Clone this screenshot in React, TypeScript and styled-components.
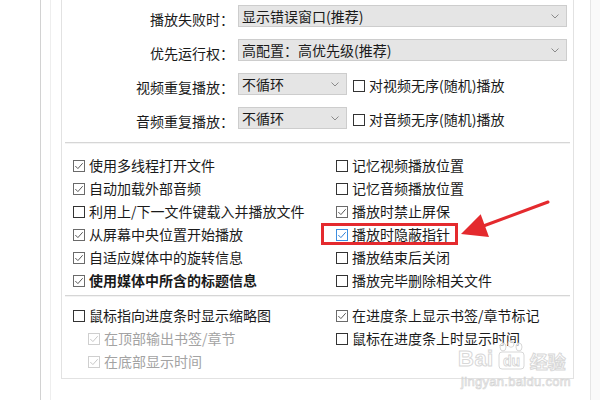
import React from 'react';
import styled, { createGlobalStyle } from 'styled-components';

const GlobalStyle = createGlobalStyle`
  html, body { margin: 0; padding: 0; background: #fff; }
  body { font-family: "Noto Sans CJK SC", "Noto Sans", sans-serif; color: #1a1a1a; }
  * { box-sizing: border-box; }
`;

const Page = styled.div`
  position: relative;
  display: flex;
  width: 600px;
  height: 400px;
  overflow: hidden;
  background: #fff;
`;

const Spacer = styled.div<{ $w: number; $bg?: string }>`
  flex: 0 0 ${p => p.$w}px;
  background: ${p => p.$bg ?? 'transparent'};
`;

const VRule = styled.div<{ $color: string }>`
  flex: 0 0 1px;
  background: ${p => p.$color};
`;

const Main = styled.div`
  flex: 0 0 523px;
  padding-left: 10px;
`;

const Panel = styled.div`
  width: 513px;
  border: 1px solid #e2e2e2;
  border-top: none;
  display: flex;
  flex-direction: column;
`;

const FormGrid = styled.div`
  display: grid;
  grid-template-columns: 172px 1fr;
  grid-auto-rows: 22px;
  column-gap: 4px;
  row-gap: 12px;
  padding: 5px 0 13px;
`;

const FieldLabel = styled.div`
  height: 22px;
  text-align: right;
  font-size: 14px;
  line-height: 22px;
  white-space: nowrap;
  transform: translateY(3px);
`;

const Select = styled.div<{ $w: number }>`
  width: ${p => p.$w}px;
  height: 22px;
  background: #e5e5e5;
  border: 1px solid #cdcdcd;
  display: flex;
  align-items: center;
  justify-content: space-between;
  padding-left: 3px;
  font-size: 14px;
  line-height: 20px;
  white-space: nowrap;
`;

const Chevron = styled.svg`
  flex: none;
  width: 8px;
  height: 5px;
  margin-right: 7px;
`;

const InlineGroup = styled.div`
  display: flex;
  align-items: flex-start;
  gap: 6px;
  height: 22px;
`;

const Sep = styled.div`
  height: 2px;
  margin: 0 3px;
  border-top: 1px solid #d6d6d6;
  border-bottom: 1px solid #f3f3f3;
`;

const CheckGrid = styled.div<{ $pt: number; $pb: number }>`
  display: grid;
  grid-template-columns: 263px 1fr;
  grid-auto-rows: 23px;
  padding: ${p => p.$pt}px 0 ${p => p.$pb}px 11px;
`;

const Item = styled.div<{ $indent?: number; $disabled?: boolean; $bold?: boolean; $top?: number }>`
  position: relative;
  display: flex;
  align-items: center;
  height: 23px;
  margin-top: ${p => p.$top ?? 0}px;
  padding-left: ${p => p.$indent ?? 0}px;
  font-size: 14px;
  line-height: 23px;
  white-space: nowrap;
  font-weight: ${p => (p.$bold ? 700 : 400)};
  color: ${p => (p.$disabled ? '#a3a3a3' : '#1a1a1a')};
`;

const Box = styled.span<{ $tone: 'normal' | 'checked' | 'disabled' | 'focus' }>`
  flex: none;
  width: 12px;
  height: 12px;
  margin-right: 4px;
  display: flex;
  align-items: center;
  justify-content: center;
  background: #fff;
  border: 1px solid
    ${p =>
      p.$tone === 'normal'
        ? '#333'
        : p.$tone === 'checked'
        ? '#6a6a6a'
        : p.$tone === 'focus'
        ? '#3d8ee0'
        : '#cfcfcf'};
`;

const Highlight = styled.span`
  position: absolute;
  left: -15px;
  top: 0;
  width: 137px;
  height: 22px;
  border: 3px solid #e42a2e;
  pointer-events: none;
`;

const ArrowSvg = styled.svg`
  position: absolute;
  left: 450px;
  top: 190px;
  width: 110px;
  height: 60px;
`;

const Watermark = styled.div`
  position: absolute;
  left: 458px;
  top: 340px;
  display: flex;
  flex-direction: column;
  align-items: flex-start;
  pointer-events: none;
`;

const WmRow = styled.div`
  display: flex;
  align-items: flex-end;
  height: 30px;
`;

const WmLatin = styled.span<{ $size: number }>`
  font-family: "Liberation Sans", Arial, sans-serif;
  font-weight: 700;
  font-size: ${p => p.$size}px;
  line-height: 1;
  color: rgba(255, 255, 255, 0.7);
  -webkit-text-stroke: 1px #d8d8d8;
  letter-spacing: 0.5px;
`;

const WmCjk = styled.span`
  font-family: "Noto Sans CJK SC", sans-serif;
  font-weight: 700;
  font-size: 18px;
  line-height: 1;
  color: rgba(255, 255, 255, 0.7);
  -webkit-text-stroke: 1px #d8d8d8;
  margin-left: 1px;
`;

const Paw = styled.svg`
  width: 33px;
  height: 30px;
  margin: 0 1px;
`;

const WmUrl = styled(WmLatin)`
  margin-top: 5px;
  margin-left: 3px;
  font-weight: 400;
  letter-spacing: 0.3px;
  -webkit-text-stroke: 0.7px #d4d4d4;
`;

type Tone = 'normal' | 'checked' | 'disabled' | 'focus';

const Check: React.FC<{ tone: Tone; checked: boolean }> = ({ tone, checked }) => {
  const color = tone === 'focus' ? '#2f80d8' : tone === 'disabled' ? '#c8c8c8' : '#5a5a5a';
  return (
    <Box $tone={tone}>
      {checked && (
        <svg width="10" height="10" viewBox="0 0 10 10">
          <polyline points="1.3,5 3.9,7.6 8.7,2.2" fill="none" stroke={color} strokeWidth="1" />
        </svg>
      )}
    </Box>
  );
};

interface Opt {
  text: string;
  checked?: boolean;
  disabled?: boolean;
  bold?: boolean;
  indent?: number;
  focus?: boolean;
}

const CheckItem: React.FC<Opt & { top?: number }> = ({ text, checked = false, disabled, bold, indent, focus, top }) => {
  const tone: Tone = disabled ? 'disabled' : focus ? 'focus' : checked ? 'checked' : 'normal';
  return (
    <Item $indent={indent} $disabled={disabled} $bold={bold} $top={top}>
      {focus && <Highlight />}
      <Check tone={tone} checked={checked} />
      <span>{text}</span>
    </Item>
  );
};

const ChevronIcon = () => (
  <Chevron viewBox="0 0 8 5">
    <polyline points="0.5,0.5 4,4 7.5,0.5" fill="none" stroke="#8a8a8a" strokeWidth="1" />
  </Chevron>
);

const middle: Opt[] = [
  { text: '使用多线程打开文件', checked: true },
  { text: '记忆视频播放位置' },
  { text: '自动加载外部音频', checked: true },
  { text: '记忆音频播放位置' },
  { text: '利用上/下一文件键载入并播放文件' },
  { text: '播放时禁止屏保', checked: true },
  { text: '从屏幕中央位置开始播放', checked: true },
  { text: '播放时隐蔽指针', checked: true, focus: true },
  { text: '自适应媒体中的旋转信息', checked: true },
  { text: '播放结束后关闭' },
  { text: '使用媒体中所含的标题信息', checked: true, bold: true },
  { text: '播放完毕删除相关文件' },
];

const bottom: (Opt | null)[] = [
  { text: '鼠标指向进度条时显示缩略图' },
  { text: '在进度条上显示书签/章节标记', checked: true },
  { text: '在顶部输出书签/章节', checked: true, disabled: true, indent: 15 },
  { text: '鼠标在进度条上时显示时间' },
  { text: '在底部显示时间', checked: true, disabled: true, indent: 15 },
  null,
];

export default function App() {
  return (
    <>
      <GlobalStyle />
      <Page>
        <Spacer $w={40} />
        <VRule $color="#d2d2d2" />
        <Spacer $w={9} />
        <VRule $color="#eeeeee" />
        <Main>
          <Panel>
            <FormGrid>
              <FieldLabel>播放失败时：</FieldLabel>
              <Select $w={329}>
                <span>显示错误窗口(推荐)</span>
                <ChevronIcon />
              </Select>
              <FieldLabel>优先运行权：</FieldLabel>
              <Select $w={329}>
                <span>高配置：高优先级(推荐)</span>
                <ChevronIcon />
              </Select>
              <FieldLabel>视频重复播放：</FieldLabel>
              <InlineGroup>
                <Select $w={109}>
                  <span>不循环</span>
                  <ChevronIcon />
                </Select>
                <CheckItem text="对视频无序(随机)播放" top={1} />
              </InlineGroup>
              <FieldLabel>音频重复播放：</FieldLabel>
              <InlineGroup>
                <Select $w={109}>
                  <span>不循环</span>
                  <ChevronIcon />
                </Select>
                <CheckItem text="对音频无序(随机)播放" top={1} />
              </InlineGroup>
            </FormGrid>
            <Sep />
            <CheckGrid $pt={10} $pb={3}>
              {middle.map(o => (
                <CheckItem key={o.text} {...o} />
              ))}
            </CheckGrid>
            <Sep />
            <CheckGrid $pt={7} $pb={5}>
              {bottom.map((o, i) => (o ? <CheckItem key={o.text} {...o} /> : <div key={i} />))}
            </CheckGrid>
          </Panel>
        </Main>
        <Spacer $w={16} />
        <VRule $color="#e6e6e6" />
        <Spacer $w={9} $bg="#fafafa" />

        <ArrowSvg viewBox="0 0 110 60">
          <line x1="98" y1="12" x2="32" y2="36.5" stroke="#e42a2e" strokeWidth="3" strokeLinecap="round" />
          <polygon points="11,44 30.7,24.3 39,46.9" fill="#e42a2e" />
        </ArrowSvg>

        <Watermark>
          <WmRow>
            <WmLatin $size={22}>Bai</WmLatin>
            <Paw viewBox="0 0 33 30">
              <g fill="rgba(255,255,255,0.7)" stroke="#d8d8d8" strokeWidth="1">
                <ellipse cx="8" cy="7" rx="3" ry="4" />
                <ellipse cx="16" cy="4" rx="3" ry="3.3" />
                <ellipse cx="24" cy="7" rx="3" ry="4" />
                <path d="M4 15 Q4 12 7 12 L26 12 Q29 12 29 15 L29 26 Q29 29 26 29 L7 29 Q4 29 4 26 Z" />
              </g>
              <text
                x="16.5"
                y="26"
                textAnchor="middle"
                fontFamily="Liberation Sans, Arial, sans-serif"
                fontWeight="700"
                fontSize="14"
                fill="rgba(255,255,255,0.8)"
                stroke="#d4d4d4"
                strokeWidth="0.8"
              >
                du
              </text>
            </Paw>
            <WmCjk>经验</WmCjk>
          </WmRow>
          <WmUrl $size={13}>jingyan.baidu.com</WmUrl>
        </Watermark>
      </Page>
    </>
  );
}
